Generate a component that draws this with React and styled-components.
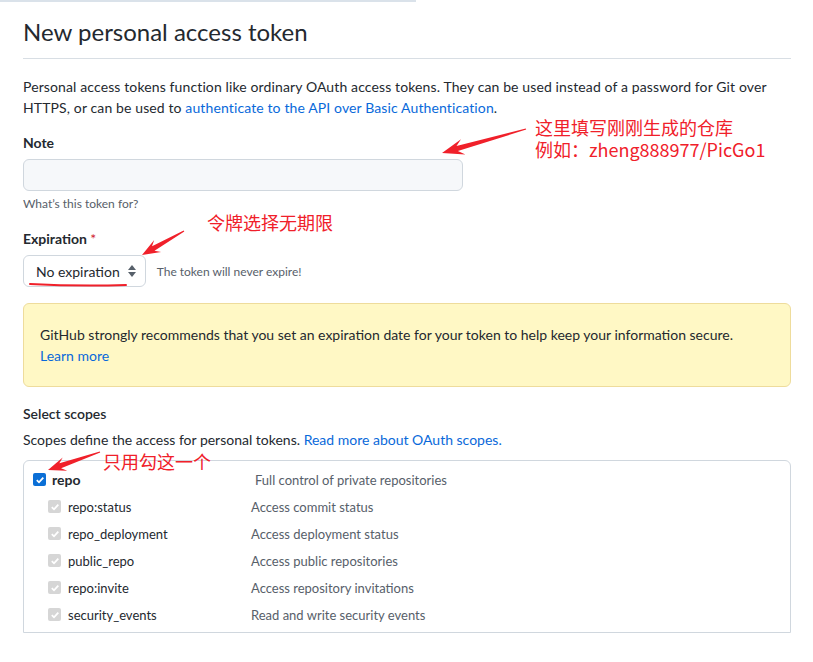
import React from 'react';
import styled, { createGlobalStyle } from 'styled-components';

const GlobalStyle = createGlobalStyle`
  body {
    margin: 0;
    background: #ffffff;
    font-family: Lato, "Liberation Sans", sans-serif;
    color: #24292f;
  }
`;

const Page = styled.div`
  position: relative;
  width: 813px;
  height: 662px;
  overflow: hidden;
  background: #ffffff;
`;

const TopStrip = styled.div`
  width: 416px;
  height: 2px;
  background: #dae2ea;
`;

const Content = styled.div`
  width: 768px;
  margin-left: 23px;
  padding-top: 12px;
`;

const Title = styled.h1`
  margin: 0;
  padding-bottom: 8px;
  font-size: 24px;
  line-height: 36px;
  font-weight: 400;
  border-bottom: 1px solid #d8dee4;
`;

const Lead = styled.p`
  margin: 17px 0 0;
  font-size: 14px;
  line-height: 21px;
  letter-spacing: 0.12px;
`;

const Link = styled.a`
  color: #0969da;
  text-decoration: none;
`;

const Label = styled.div`
  margin-top: ${({ $top }) => $top || 14}px;
  font-size: 14px;
  line-height: 21px;
  font-weight: 700;

  span {
    color: #cf222e;
    font-weight: 400;
  }
`;

const TextInput = styled.div`
  margin-top: 6px;
  width: 440px;
  height: 32px;
  box-sizing: border-box;
  background: #f6f8fa;
  border: 1px solid #d0d7de;
  border-radius: 6px;
`;

const Hint = styled.div`
  margin-top: 4px;
  font-size: 12px;
  line-height: 18px;
  color: #57606a;
`;

const SelectRow = styled.div`
  display: flex;
  align-items: center;
  gap: 11px;
  margin-top: 6px;
`;

const Select = styled.div`
  display: flex;
  align-items: center;
  gap: 7px;
  height: 32px;
  box-sizing: border-box;
  padding: 0 8px 0 12px;
  border: 1px solid #d0d7de;
  border-radius: 6px;
  font-size: 14px;
  color: #24292f;
`;

const Note = styled.span`
  font-size: 12px;
  color: #57606a;
`;

const Flash = styled.div`
  margin-top: 16px;
  padding: 20px 16px;
  background: #fff8c5;
  border: 1px solid #eedc9c;
  border-radius: 6px;
  font-size: 14px;
  line-height: 21px;
`;

const SectionTitle = styled.div`
  margin-top: 16px;
  font-size: 14px;
  line-height: 21px;
  font-weight: 600;
`;

const SectionText = styled.p`
  margin: 5px 0 0;
  font-size: 14px;
  line-height: 21px;
`;

const ScopeBox = styled.div`
  margin-top: 10px;
  border: 1px solid #d0d7de;
  border-radius: 6px 6px 0 0;
  padding: 5px 0 4px;
`;

const ScopeRow = styled.div`
  display: flex;
  align-items: center;
  height: 27px;
  padding-left: ${({ $sub }) => ($sub ? 24 : 9)}px;
  font-size: 13px;
`;

const ScopeName = styled.label`
  display: flex;
  align-items: center;
  gap: ${({ $sub }) => ($sub ? 7 : 6)}px;
  width: ${({ $sub }) => ($sub ? 203 : 222)}px;
  font-size: ${({ $sub }) => ($sub ? 13 : 14)}px;
  font-weight: ${({ $sub }) => ($sub ? 400 : 700)};
  color: #24292f;
`;

const ScopeDesc = styled.span`
  color: #57606a;
`;

const Check = styled.span`
  display: inline-flex;
  align-items: center;
  justify-content: center;
  width: 13px;
  height: 13px;
  border-radius: 2px;
  background: ${({ $disabled }) => ($disabled ? '#d6d6d6' : '#0b6fd6')};
  flex: none;
`;

const Overlay = styled.svg`
  position: absolute;
  left: 0;
  top: 0;
  pointer-events: none;
`;

const Annotation = styled.div`
  position: absolute;
  left: ${({ $x }) => $x}px;
  top: ${({ $y }) => $y}px;
  font-family: "Noto Sans CJK SC", sans-serif;
  font-size: 18px;
  line-height: 22px;
  color: #f0202a;
  white-space: nowrap;
`;

const arrow = (tx, ty, px, py, head = 18, hw = 7) => {
  const len = Math.hypot(px - tx, py - ty);
  const ux = (px - tx) / len;
  const uy = (py - ty) / len;
  const nx = -uy;
  const ny = ux;
  const pt = (x, y) => `${x.toFixed(1)},${y.toFixed(1)}`;
  const neck = [px - ux * head * 0.72, py - uy * head * 0.72];
  const barb = [px - ux * head, py - uy * head];
  return [
    pt(tx + nx * 0.6, ty + ny * 0.6),
    pt(neck[0] + nx * 2.6, neck[1] + ny * 2.6),
    pt(barb[0] + nx * hw, barb[1] + ny * hw),
    pt(px, py),
    pt(barb[0] - nx * hw, barb[1] - ny * hw),
    pt(neck[0] - nx * 2.6, neck[1] - ny * 2.6),
    pt(tx - nx * 0.6, ty - ny * 0.6),
  ].join(' ');
};

const CheckMark = () => (
  <svg width="10" height="10" viewBox="0 0 10 10">
    <path d="M1.8 5.2 L4 7.3 L8.3 2.6" fill="none" stroke="#fff" strokeWidth="1.8" />
  </svg>
);

const SortIcon = () => (
  <svg width="10" height="14" viewBox="0 0 10 14">
    <path d="M5 1 L9 6 H1 Z" fill="#57606a" />
    <path d="M5 13 L9 8 H1 Z" fill="#57606a" />
  </svg>
);

const subScopes = [
  ['repo:status', 'Access commit status'],
  ['repo_deployment', 'Access deployment status'],
  ['public_repo', 'Access public repositories'],
  ['repo:invite', 'Access repository invitations'],
  ['security_events', 'Read and write security events'],
];

const App = () => {
  return (
    <Page>
      <GlobalStyle />
      <TopStrip />
      <Content>
        <Title>New personal access token</Title>
        <Lead>
          Personal access tokens function like ordinary OAuth access tokens. They can be used instead of a password for Git over
          HTTPS, or can be used to <Link href="#">authenticate to the API over Basic Authentication</Link>.
        </Lead>

        <Label>Note</Label>
        <TextInput />
        <Hint>What’s this token for?</Hint>

        <Label $top={15}>
          Expiration <span>*</span>
        </Label>
        <SelectRow>
          <Select>
            No expiration
            <SortIcon />
          </Select>
          <Note>The token will never expire!</Note>
        </SelectRow>

        <Flash>
          GitHub strongly recommends that you set an expiration date for your token to help keep your information secure.
          <br />
          <Link href="#">Learn more</Link>
        </Flash>

        <SectionTitle>Select scopes</SectionTitle>
        <SectionText>
          Scopes define the access for personal tokens. <Link href="#">Read more about OAuth scopes.</Link>
        </SectionText>

        <ScopeBox>
          <ScopeRow>
            <ScopeName>
              <Check>
                <CheckMark />
              </Check>
              repo
            </ScopeName>
            <ScopeDesc>Full control of private repositories</ScopeDesc>
          </ScopeRow>
          {subScopes.map(([name, desc]) => (
            <ScopeRow key={name} $sub>
              <ScopeName $sub>
                <Check $disabled>
                  <CheckMark />
                </Check>
                {name}
              </ScopeName>
              <ScopeDesc>{desc}</ScopeDesc>
            </ScopeRow>
          ))}
        </ScopeBox>
      </Content>

      <Overlay width="813" height="662">
        <polygon points={arrow(526, 129, 442, 153, 22, 8)} fill="#f0202a" />
        <polygon points={arrow(184, 231, 142, 255, 18, 7)} fill="#f0202a" />
        <polygon points={arrow(100, 452, 48, 470, 18, 7)} fill="#f0202a" />
        <path d="M30 284 Q78 286.5 126 285" fill="none" stroke="#f0202a" strokeWidth="2" strokeLinecap="round" />
      </Overlay>

      <Annotation $x={535} $y={116}>
        这里填写刚刚生成的仓库
        <br />
        例如：zheng888977/PicGo1
      </Annotation>
      <Annotation $x={207} $y={211}>令牌选择无期限</Annotation>
      <Annotation $x={103} $y={450}>只用勾这一个</Annotation>
    </Page>
  );
};

export default App;
